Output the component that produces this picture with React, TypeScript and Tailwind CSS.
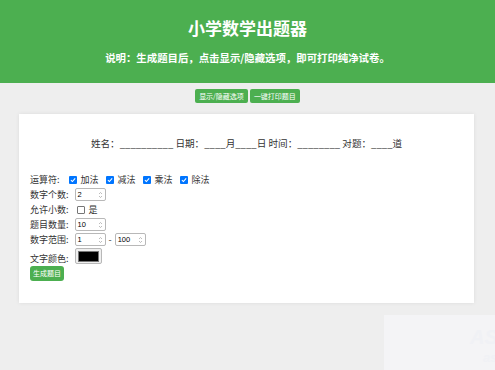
import React from 'react'

const font = "font-['Noto_Sans_CJK_SC',sans-serif]"

function Check({ checked }: { checked: boolean }) {
  if (!checked) {
    return <span className="inline-block w-[8px] h-[8px] border border-[#767676] rounded-[1px] bg-white" />
  }
  return (
    <span className="inline-flex items-center justify-center w-[8px] h-[8px] rounded-[1px] bg-[#0075ff]">
      <svg width="6" height="6" viewBox="0 0 10 10">
        <path d="M1.5 5.2 L4 7.6 L8.6 2.4" fill="none" stroke="white" strokeWidth="1.8" />
      </svg>
    </span>
  )
}

function NumberBox({ value }: { value: string }) {
  return (
    <div className="flex items-center w-[31px] h-[13px] border border-[#b8b8b8] rounded-[2px] bg-white">
      <span className="flex-1 pl-[2px] text-[7.5px] leading-none text-black font-['Liberation_Sans',sans-serif]">{value}</span>
      <span className="flex flex-col items-center justify-center w-[8px] h-full">
        <svg width="5" height="8" viewBox="0 0 5 8">
          <path d="M1 3 L2.5 1.5 L4 3" fill="none" stroke="#a0a0a0" strokeWidth="0.7" />
          <path d="M1 5 L2.5 6.5 L4 5" fill="none" stroke="#a0a0a0" strokeWidth="0.7" />
        </svg>
      </span>
    </div>
  )
}

export default function App() {
  const ops = ['加法', '减法', '乘法', '除法']

  return (
    <div className={`relative min-h-[370px] bg-[#eeeeee] ${font}`}>
      {/* Header */}
      <div className="h-[83px] bg-[#4caf50] flex flex-col items-center pt-[18px] text-white">
        <h1 className="text-[17px] leading-[20px] font-bold">小学数学出题器</h1>
        <p className="mt-[13px] text-[10.4px] leading-[14px] font-bold">说明：生成题目后，点击显示/隐藏选项，即可打印纯净试卷。</p>
      </div>

      {/* Top buttons */}
      <div className="mt-[6px] flex justify-center gap-[2px]">
        <button className="h-[14px] px-[4px] bg-[#4caf50] text-white text-[7px] leading-none rounded-[2px]">显示/隐藏选项</button>
        <button className="h-[14px] px-[4px] bg-[#4caf50] text-white text-[7px] leading-none rounded-[2px]">一键打印题目</button>
      </div>

      {/* Card */}
      <div className="mt-[11px] ml-[19px] w-[455px] bg-white shadow-[0_0_4px_rgba(0,0,0,0.08)] px-[11px] pt-[22px] pb-[22px] text-[#333]">
        <div className="text-center text-[9.6px] leading-[14px] whitespace-pre">
          姓名：__________ 日期：____月____日 时间：________ 对题：____道
        </div>

        <div className="mt-[22px] flex flex-col text-[9px] leading-none">
          <div className="h-[15px] flex items-center">
            <span>运算符:</span>
            <span className="ml-[9px] flex items-center">
              {ops.map((o) => (
                <span key={o} className="flex items-center mr-[7px]">
                  <Check checked />
                  <span className="ml-[4px]">{o}</span>
                </span>
              ))}
            </span>
          </div>
          <div className="h-[15px] flex items-center">
            <span>数字个数:</span>
            <span className="ml-[6px]"><NumberBox value="2" /></span>
          </div>
          <div className="h-[15px] flex items-center">
            <span>允许小数:</span>
            <span className="ml-[8px] flex items-center">
              <Check checked={false} />
              <span className="ml-[4px]">是</span>
            </span>
          </div>
          <div className="h-[15px] flex items-center">
            <span>题目数量:</span>
            <span className="ml-[6px]"><NumberBox value="10" /></span>
          </div>
          <div className="h-[15px] flex items-center">
            <span>数字范围:</span>
            <span className="ml-[6px] flex items-center">
              <NumberBox value="1" />
              <span className="mx-[3px]">-</span>
              <NumberBox value="100" />
            </span>
          </div>
          <div className="h-[18px] flex items-center">
            <span className="mt-[4px]">文字颜色:</span>
            <span className="ml-[6px] flex items-center justify-center w-[27px] h-[16px] border border-[#b8b8b8] rounded-[2px] bg-[#efefef]">
              <span className="block w-[21px] h-[11px] bg-black border border-[#777]" />
            </span>
          </div>
          <div className="mt-[1px]">
            <button className="h-[15px] px-[3px] bg-[#4caf50] text-white text-[7px] leading-none rounded-[3px]">生成题目</button>
          </div>
        </div>
      </div>

      {/* Faint overlay at bottom right */}
      <div className="absolute right-0 bottom-0 w-[111px] h-[55px] bg-[#f4f4f6] overflow-hidden">
        <span className="absolute left-[86px] top-[12px] text-[20px] leading-none font-bold italic text-[#f0f1f5] font-['Liberation_Sans',sans-serif]">AS</span>
        <span className="absolute left-[99px] top-[36px] text-[13px] leading-none font-bold italic text-[#f0f1f5] font-['Liberation_Sans',sans-serif]">as</span>
      </div>
    </div>
  )
}
